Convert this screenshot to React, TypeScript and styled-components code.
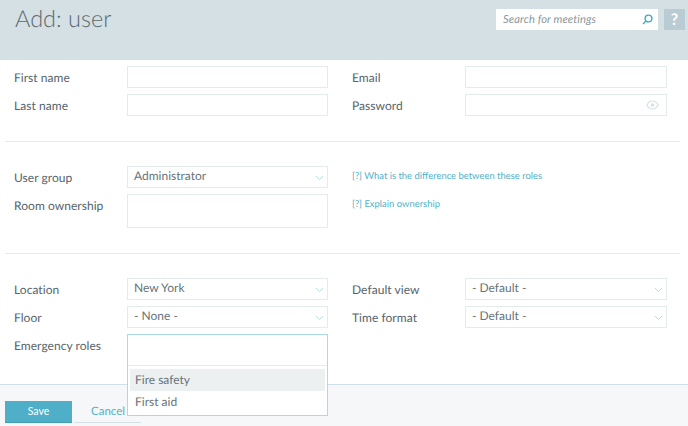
import React from "react";
import styled, { createGlobalStyle } from "styled-components";

const Global = createGlobalStyle`
  html, body { margin: 0; padding: 0; background: #fff; }
  body { font-family: Lato, "Open Sans", sans-serif; color: #56646b; overflow: hidden; text-rendering: geometricPrecision; }
  * { box-sizing: border-box; }
`;
const Page = styled.div`
  width: 688px; height: 426px; display: flex; flex-direction: column; overflow: hidden;
`;
const Header = styled.header`
  height: 60px; flex: none; background: #d5e0e5; display: flex; align-items: flex-start;
  padding: 9px 3px 0 15px;
`;
const Title = styled.h1`
  margin: -2px auto 0 0; font-size: 23.5px; line-height: 24px; font-weight: 300; color: #5c6a70; letter-spacing: 0;
`;
const Search = styled.div`
  width: 162px; height: 21px; background: #fff; display: flex; align-items: center;
  justify-content: space-between; padding: 0 5px 0 7px;
  font-size: 11.2px; font-style: italic; color: #8c979c;
  letter-spacing: 0.1px;
`;
const Help = styled.div`
  width: 21px; height: 21px; margin-left: 6px; background: #b9ccd4; color: #fff;
  display: flex; align-items: center; justify-content: center; font-weight: 700; font-size: 16px;
`;
const Section = styled.section<{ $h: number; $top: number }>`
  height: ${p => p.$h}px; flex: none; padding: ${p => p.$top}px 21px 0 14px;
  display: grid; grid-template-columns: 113px 201px 137px 202px;
  grid-auto-rows: min-content; row-gap: 6px; align-content: start;
`;
const Rule = styled.hr`
  flex: none; height: 1px; margin: 0 8px 0 5px; border: 0; background: #e4ebed;
`;
const Label = styled.div<{ $right?: boolean }>`
  font-size: 12px; line-height: 22px; height: 22px; padding-top: 1px; color: #56646b; letter-spacing: 0.05px;
  ${p => p.$right && "margin-left: 24px;"}
`;
const Field = styled.div<{ $h?: number }>`
  height: ${p => p.$h ?? 22}px; border: 1px solid #e3ebed; background: #fff; display: flex;
  align-items: center; justify-content: space-between; padding: 0 3px 3px 6px;
  font-size: 12px; color: #66747a; letter-spacing: 0;
`;
const HelpLink = styled.a`
  grid-column: 3 / 5; margin-left: 24px; font-size: 9.45px; line-height: 22px; height: 22px; color: #4fb0c8; letter-spacing: 0;
`;
const Spacer = styled.div`
  grid-column: 3 / 5;
`;
const Popup = styled.div`
  grid-column: 2; height: 82px; margin-bottom: -60px; border: 1px solid #a9dae8; background: #fff;
  position: relative; z-index: 2; display: flex; flex-direction: column;
`;
const PopupInput = styled.div`
  height: 31px; flex: none; border-bottom: 1px solid #e3ebed;
`;
const Options = styled.div`
  padding: 3px 2px 0 2px;
`;
const Option = styled.div<{ $active?: boolean }>`
  height: 22px; line-height: 22px; padding-left: 5px; font-size: 12px; color: #66747a;
  background: ${p => (p.$active ? "#edf0f1" : "transparent")};
`;
const Footer = styled.footer`
  flex: 1; border-top: 1px solid #cfdfe8; background: #f5f7f8; padding: 16px 0 0 5px;
  display: flex; align-items: flex-start;
`;
const Save = styled.button`
  width: 67px; height: 22px; border: 0; border-bottom: 1px solid #3f9db6; background: #50afc8; color: #fff;
  font: 10.5px Lato, sans-serif; padding: 0 0 2px;
`;
const Cancel = styled.a`
  width: 67px; height: 22px; margin-left: 2px; padding-left: 17px; font-size: 11.5px; line-height: 21px;
  color: #4fb0c8; border-bottom: 1px solid #d5e0e5;
`;

const Chevron = () => (
  <svg width="9" height="6" viewBox="0 0 9 6" fill="none" stroke="#bcdde7" strokeWidth="1" style={{ marginTop: 5 }}>
    <path d="M1 1l3.5 3.5L8 1" />
  </svg>
);
const Select = ({ value }: { value: string }) => (
  <Field>
    {value}
    <Chevron />
  </Field>
);
const Eye = () => (
  <svg width="13" height="10" viewBox="0 0 13 10" fill="none" stroke="#d3e1e5" strokeWidth="1.2" style={{ marginTop: 3, marginRight: 4 }}>
    <path d="M.8 5C2.3 2.3 4.2 1 6.5 1s4.2 1.3 5.7 4C10.7 7.7 8.8 9 6.5 9S2.3 7.7.8 5z" />
    <circle cx="6.5" cy="5" r="1.7" fill="#d3e1e5" stroke="none" />
  </svg>
);
const Lens = () => (
  <svg width="11" height="11" viewBox="0 0 11 11" fill="none" stroke="#3fa9c4" strokeWidth="1.4">
    <circle cx="6.5" cy="4.5" r="3.4" />
    <path d="M4 7L1 10" />
  </svg>
);

export default function App() {
  return (
    <Page>
      <Global />
      <Header>
        <Title>Add: user</Title>
        <Search>Search for meetings<Lens /></Search>
        <Help>?</Help>
      </Header>
      <Section $h={81} $top={6}>
        <Label>First name</Label>
        <Field />
        <Label $right>Email</Label>
        <Field />
        <Label>Last name</Label>
        <Field />
        <Label $right>Password</Label>
        <Field><span /><Eye /></Field>
      </Section>
      <Rule />
      <Section $h={111} $top={24}>
        <Label>User group</Label>
        <Select value="Administrator" />
        <HelpLink>[?] What is the difference between these roles</HelpLink>
        <Label>Room ownership</Label>
        <Field $h={34} />
        <HelpLink>[?] Explain ownership</HelpLink>
      </Section>
      <Rule />
      <Section $h={130} $top={24}>
        <Label>Location</Label>
        <Select value="New York" />
        <Label $right>Default view</Label>
        <Select value="- Default -" />
        <Label>Floor</Label>
        <Select value="- None -" />
        <Label $right>Time format</Label>
        <Select value="- Default -" />
        <Label>Emergency roles</Label>
        <Popup>
          <PopupInput />
          <Options>
            <Option $active>Fire safety</Option>
            <Option>First aid</Option>
          </Options>
        </Popup>
        <Spacer />
      </Section>
      <Footer>
        <Save>Save</Save>
        <Cancel>Cancel</Cancel>
      </Footer>
    </Page>
  );
}
